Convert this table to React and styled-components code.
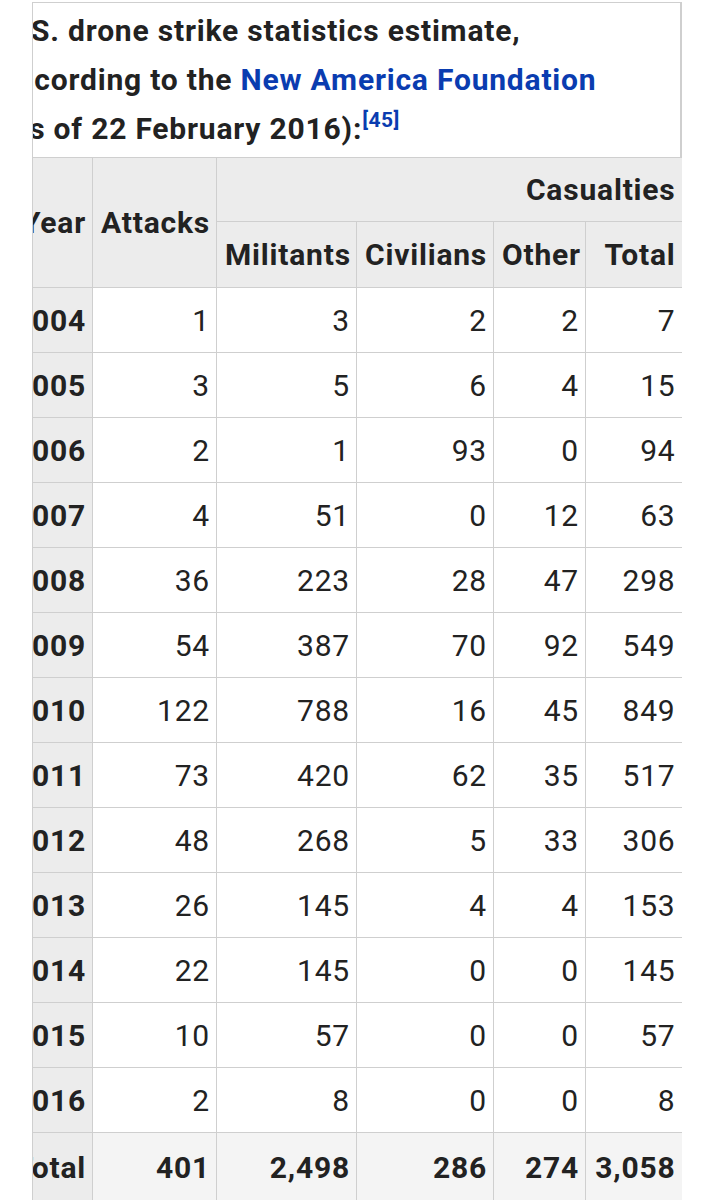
import React from "react";
import styled, { createGlobalStyle } from "styled-components";

const GlobalStyle = createGlobalStyle`
  html, body {
    margin: 0;
    padding: 0;
    background: #ffffff;
  }
  body {
    font-family: Roboto, "Noto Sans", "Liberation Sans", sans-serif;
    color: #222222;
    -webkit-font-smoothing: antialiased;
  }
`;

const Frame = styled.div`
  margin: 2px 0 0 32px;
  width: 650px;
  overflow: hidden;
  border-left: 1px solid #cfcfcf;
  box-sizing: border-box;
`;

const Scroller = styled.div`
  margin-left: -34px;
  width: 683px;
`;

const Caption = styled.div`
  border-top: 1px solid #cfcfcf;
  border-right: 2px solid #cfcfcf;
  padding: 3px 8px 4px 2px;
  font-size: 30px;
  letter-spacing: 0.8px;
  font-weight: 700;
  line-height: 49px;
  white-space: nowrap;
`;

const Link = styled.span`
  color: #0a3cb0;
`;

const Ref = styled.sup`
  color: #0a3cb0;
  font-size: 21px;
  letter-spacing: 0.5px;
  line-height: 0;
  vertical-align: 12px;
`;

const Table = styled.table`
  border-collapse: collapse;
  table-layout: fixed;
  width: 683px;
  font-size: 30px;
  letter-spacing: 0.8px;
  border-right: 2px solid #cfcfcf;
`;

const Cell = styled.td`
  border: 1px solid #cfcfcf;
  padding: 0 6px 0 8px;
  text-align: right;
  vertical-align: middle;
  white-space: nowrap;
  height: ${(p) => p.$h || 64}px;
  box-sizing: border-box;
  font-weight: ${(p) => (p.$bold ? 700 : 400)};
  background: ${(p) => p.$bg || "#ffffff"};
`;

const Head = styled(Cell).attrs({ as: "th" })`
  font-weight: 700;
  background: #ececec;
`;

const rows = [
  ["2004", 1, 3, 2, 2, 7],
  ["2005", 3, 5, 6, 4, 15],
  ["2006", 2, 1, 93, 0, 94],
  ["2007", 4, 51, 0, 12, 63],
  ["2008", 36, 223, 28, 47, 298],
  ["2009", 54, 387, 70, 92, 549],
  ["2010", 122, 788, 16, 45, 849],
  ["2011", 73, 420, 62, 35, 517],
  ["2012", 48, 268, 5, 33, 306],
  ["2013", 26, 145, 4, 4, 153],
  ["2014", 22, 145, 0, 0, 145],
  ["2015", 10, 57, 0, 0, 57],
  ["2016", 2, 8, 0, 0, 8],
];

const totals = ["Total", "401", "2,498", "286", "274", "3,058"];
const widths = [93, 124, 140, 137, 92, 97];

export default function App() {
  return (
    <>
      <GlobalStyle />
      <Frame>
        <Scroller>
          <Caption>
            U.S. drone strike statistics estimate,
            <br />
            according to the <Link>New America Foundation</Link>
            <br />
            (as of 22 February 2016):<Ref>[45]</Ref>
          </Caption>
          <Table>
            <colgroup>
              {widths.map((w, i) => (
                <col key={i} style={{ width: w }} />
              ))}
            </colgroup>
            <thead>
              <tr>
                <Head rowSpan={2} $h={64}>Year</Head>
                <Head rowSpan={2} $h={64}>Attacks</Head>
                <Head colSpan={4} $h={64}>Casualties</Head>
              </tr>
              <tr>
                <Head $h={66}>Militants</Head>
                <Head $h={66}>Civilians</Head>
                <Head $h={66}>Other</Head>
                <Head $h={66}>Total</Head>
              </tr>
            </thead>
            <tbody>
              {rows.map((r) => (
                <tr key={r[0]}>
                  <Head $h={65}>{r[0]}</Head>
                  {r.slice(1).map((v, i) => (
                    <Cell key={i} $h={65}>{v}</Cell>
                  ))}
                </tr>
              ))}
              <tr>
                <Head $h={70}>{totals[0]}</Head>
                {totals.slice(1).map((v, i) => (
                  <Cell key={i} $h={70} $bold $bg="#f4f4f4">{v}</Cell>
                ))}
              </tr>
            </tbody>
          </Table>
        </Scroller>
      </Frame>
    </>
  );
}
